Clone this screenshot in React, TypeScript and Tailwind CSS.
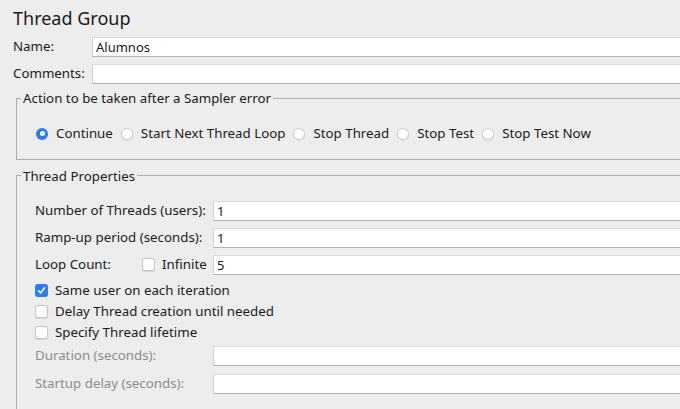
import React from "react";

const font = { fontFamily: '"Noto Sans", "Open Sans", sans-serif' };

function TextField({ value = "", disabled = false }: { value?: string; disabled?: boolean }) {
  return (
    <input
      readOnly
      value={value}
      disabled={disabled}
      className="block h-[20px] w-full border-t border-t-[#dadada] border-b border-b-[#b4b4b4] border-l border-l-[#d2d2d2] bg-white px-[3px] text-[13px] leading-[18px] text-[#1b1b1b] outline-none"
    />
  );
}

function Radio({ label, checked = false }: { label: string; checked?: boolean }) {
  return (
    <label className="flex items-center">
      {checked ? (
        <span className="flex h-[12px] w-[12px] items-center justify-center rounded-full bg-[#2a7cf6]">
          <span className="h-[5px] w-[5px] rounded-full bg-white" />
        </span>
      ) : (
        <span className="h-[12px] w-[12px] rounded-full border border-[#cfcfcf] bg-white shadow-[0_0.5px_1px_rgba(0,0,0,0.15)]" />
      )}
      <span className="ml-[8px] mr-[8px] text-[13.3px] text-[#1b1b1b]">{label}</span>
    </label>
  );
}

function Checkbox({ label, checked = false }: { label: string; checked?: boolean }) {
  return (
    <label className="flex items-center">
      {checked ? (
        <span className="flex h-[13px] w-[13px] items-center justify-center rounded-[3px] bg-[#2a7cf6]">
          <svg width="9" height="9" viewBox="0 0 9 9">
            <path d="M1.5 4.8 L3.6 7 L7.6 1.8" fill="none" stroke="white" strokeWidth="1.6" strokeLinecap="round" strokeLinejoin="round" />
          </svg>
        </span>
      ) : (
        <span className="h-[13px] w-[13px] rounded-[3px] border border-[#c6c6c6] bg-white shadow-[0_0.5px_1px_rgba(0,0,0,0.12)]" />
      )}
      <span className="ml-[7px] text-[13.3px] text-[#1b1b1b]">{label}</span>
    </label>
  );
}

export default function App() {
  return (
    <div className="h-[409px] w-[680px] overflow-hidden bg-[#ededed] pl-[13px] pt-[7px] text-[13.3px] text-[#1b1b1b]" style={font}>
      <h1 className="text-[18px] leading-[22px]">Thread Group</h1>

      <div className="mt-[8px] flex items-center">
        <span className="w-[79px]">Name:</span>
        <div className="flex-1">
          <TextField value="Alumnos" />
        </div>
      </div>
      <div className="mt-[7px] flex items-center">
        <span className="w-[79px]">Comments:</span>
        <div className="flex-1">
          <TextField />
        </div>
      </div>

      <fieldset className="ml-[3px] mt-[6px] border border-r-0 border-[#adadad] pb-[15px]">
        <legend className="ml-[4px] px-[2px] leading-[16px]">
          Action to be taken after a Sampler error
        </legend>
        <div className="ml-[19px] mt-[18px] flex items-center">
          <Radio label="Continue" checked />
          <Radio label="Start Next Thread Loop" />
          <Radio label="Stop Thread" />
          <Radio label="Stop Test" />
          <Radio label="Stop Test Now" />
        </div>
      </fieldset>

      <fieldset className="ml-[3px] mt-[8px] h-[300px] border border-r-0 border-[#adadad]">
        <legend className="ml-[4px] px-[2px] leading-[16px]">
          Thread Properties
        </legend>
        <div className="ml-[18px] mt-[17px] grid grid-cols-[178px_1fr] items-center gap-y-[7px]">
          <span>Number of Threads (users):</span>
          <TextField value="1" />
          <span>Ramp-up period (seconds):</span>
          <TextField value="1" />
          <div className="flex items-center">
            <span className="w-[107px]">Loop Count:</span>
            <Checkbox label="Infinite" />
          </div>
          <TextField value="5" />
        </div>

        <div className="ml-[18px] mt-[6px] flex flex-col gap-[2px] leading-[19px]">
          <Checkbox label="Same user on each iteration" checked />
          <Checkbox label="Delay Thread creation until needed" />
          <Checkbox label="Specify Thread lifetime" />
        </div>

        <div className="ml-[18px] mt-[4px] grid grid-cols-[178px_1fr] items-center gap-y-[8px]">
          <span className="text-[#8c8c8c]">Duration (seconds):</span>
          <TextField disabled />
          <span className="text-[#8c8c8c]">Startup delay (seconds):</span>
          <TextField disabled />
        </div>
      </fieldset>
    </div>
  );
}
